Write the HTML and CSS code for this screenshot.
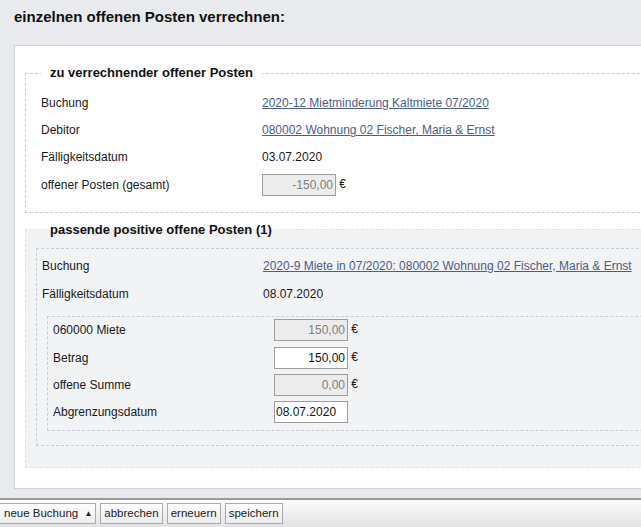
FILE: index.html
```html
<!DOCTYPE html>
<html lang="de">
<head>
    <meta charset="UTF-8">
    <title>einzelnen offenen Posten verrechnen</title>
    <link rel="stylesheet" href="styles.css">
</head>
<body>
    <h1 class="title">einzelnen offenen Posten verrechnen:</h1>

    <div class="panel">
        <fieldset class="group">
            <legend>zu verrechnender offener Posten</legend>
            <div class="row">
                <span class="label">Buchung</span>
                <a href="#" class="link">2020-12 Mietminderung Kaltmiete 07/2020</a>
            </div>
            <div class="row">
                <span class="label">Debitor</span>
                <a href="#" class="link">080002 Wohnung 02 Fischer, Maria &amp; Ernst</a>
            </div>
            <div class="row">
                <span class="label">Fälligkeitsdatum</span>
                <span>03.07.2020</span>
            </div>
            <div class="row">
                <span class="label">offener Posten (gesamt)</span>
                <span><input type="text" class="num" value="-150,00" readonly> €</span>
            </div>
        </fieldset>

        <fieldset class="group group-match">
            <legend>passende positive offene Posten (1)</legend>
            <div class="item">
                <div class="row row-tall">
                    <span class="label">Buchung</span>
                    <a href="#" class="link">2020-9 Miete in 07/2020: 080002 Wohnung 02 Fischer, Maria &amp; Ernst</a>
                </div>
                <div class="row row-tall">
                    <span class="label">Fälligkeitsdatum</span>
                    <span>08.07.2020</span>
                </div>
                <div class="split">
                    <div class="row">
                        <span class="label">060000 Miete</span>
                        <span><input type="text" class="num" value="150,00" readonly> €</span>
                    </div>
                    <div class="row">
                        <span class="label">Betrag</span>
                        <span><input type="text" class="num edit" value="150,00"> €</span>
                    </div>
                    <div class="row">
                        <span class="label">offene Summe</span>
                        <span><input type="text" class="num" value="0,00" readonly> €</span>
                    </div>
                    <div class="row">
                        <span class="label">Abgrenzungsdatum</span>
                        <span><input type="text" class="date" value="08.07.2020"></span>
                    </div>
                </div>
            </div>
        </fieldset>
    </div>

    <div class="toolbar">
        <button class="first">neue Buchung <span class="caret">▲</span></button>
        <button>abbrechen</button>
        <button>erneuern</button>
        <button>speichern</button>
    </div>
</body>
</html>
```

FILE: styles.css
```css
html, body {
    overflow: hidden;
}
body {
    margin: 0;
    width: 641px;
    height: 527px;
    background: #e9eaee;
    font-family: "Liberation Sans", Arial, sans-serif;
    font-size: 12px;
    color: #1a1a1a;
}
.title {
    margin: 0;
    padding: 8px 14px 0 14px;
    height: 37px;
    font-size: 15px;
    font-weight: bold;
    color: #111;
}
.panel {
    margin-left: 14px;
    width: 700px;
    background: #fff;
    border: 1px solid #cfd1d7;
    padding: 19px 10px 20px 10px;
    margin-bottom: 9px;
}
.group {
    margin: 0;
    padding: 8px 0 13px 15px;
    border: 1px dashed #c9ccd8;
    min-width: 0;
}
.group legend {
    margin-left: 0;
    padding: 0 9px;
    font-size: 13px;
    font-weight: bold;
    line-height: 16px;
    color: #111;
}
.group-match {
    margin-top: 9px;
    padding: 10px 0 21px 10px;
    background: #f2f3f5;
    border-color: #dfe0e6;
}
.group-match legend {
    margin-left: 5px;
}
.row {
    display: grid;
    grid-template-columns: 221px auto;
    align-items: center;
    height: 27.4px;
}
.row-tall {
    height: 28px;
}
.link {
    color: #4e5d86;
    text-decoration: underline;
}
.item {
    border: 1px dashed #c9ccd8;
    padding: 3px 0 14px 5px;
}
.split {
    margin: 8px 0 0 5px;
    border: 1px dashed #c9ccd8;
    padding: 0 0 4px 5px;
}
.split .row {
    height: 27.3px;
}
input {
    box-sizing: border-box;
    width: 74px;
    height: 22px;
    margin: 0;
    padding: 0 2px;
    border: 1px solid #9d9d9d;
    font-family: "Liberation Sans", Arial, sans-serif;
    font-size: 12px;
    vertical-align: middle;
    outline: none;
}
.num {
    text-align: right;
    background: #ececec;
    color: #808080;
}
.num.edit {
    background: #fff;
    color: #111;
}
.date {
    background: #fff;
    color: #111;
    padding-left: 1px;
}
.toolbar {
    display: flex;
    gap: 4px;
    height: 29px;
    box-sizing: border-box;
    border-top: 2px solid #9b9b9b;
    background: linear-gradient(#fbfbfb, #e3e3e5);
    padding: 3px 0 0 0;
}
.toolbar button {
    height: 21px;
    padding: 0 3px;
    border: 1px solid #a9a9a9;
    background: linear-gradient(#fdfdfd, #ececec);
    font-family: "Liberation Sans", Arial, sans-serif;
    font-size: 11.5px;
    color: #222;
}
.toolbar .first {
    border-left: none;
    padding-left: 4px;
}
.caret {
    font-size: 8px;
    margin-left: 3px;
    vertical-align: 1px;
}
```
